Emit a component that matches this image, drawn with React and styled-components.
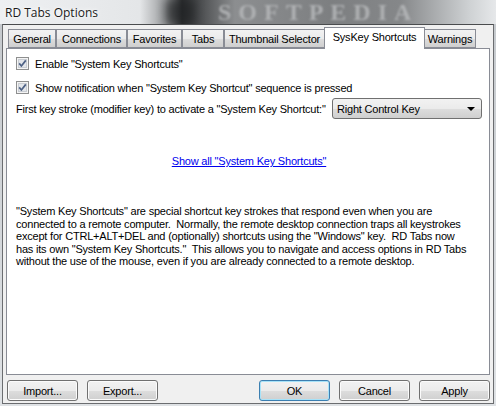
import React from "react"
import styled, { createGlobalStyle } from "styled-components"

const GlobalStyle = createGlobalStyle`
  html, body {
    margin: 0;
    padding: 0;
    background: #d9dde2;
  }
  body {
    font-family: "Liberation Sans", Arial, sans-serif;
    font-size: 11px;
    letter-spacing: -0.2px;
    color: #000;
  }
`

const tabs = [
  { label: "General", width: 48 },
  { label: "Connections", width: 71 },
  { label: "Favorites", width: 55 },
  { label: "Tabs", width: 42 },
  { label: "Thumbnail Selector", width: 101 },
  { label: "SysKey Shortcuts", width: 99, active: true },
  { label: "Warnings", width: 52 },
]

const description = [
  '"System Key Shortcuts" are special shortcut key strokes that respond even when you are',
  "connected to a remote computer.\u00a0 Normally, the remote desktop connection traps all keystrokes",
  'except for CTRL+ALT+DEL and (optionally) shortcuts using the "Windows" key.\u00a0 RD Tabs now',
  'has its own "System Key Shortcuts."\u00a0 This allows you to navigate and access options in RD Tabs',
  "without the use of the mouse, even if you are already connected to a remote desktop.",
]

function CheckIcon() {
  return (
    <svg width="13" height="13" viewBox="0 0 13 13">
      <rect x="0.5" y="0.5" width="12" height="12" fill="#f4f4f4" stroke="#8e8f8f" />
      <rect x="2.5" y="2.5" width="8" height="8" fill="#e3e6ea" stroke="#c9cdd3" />
      <path d="M3.2 6.4 L5.4 9 L9.8 3.4" fill="none" stroke="#4d6185" strokeWidth="1.7" />
    </svg>
  )
}

function App() {
  return (
    <>
      <GlobalStyle />
      <Window>
        <TitleBar>
          <DarkBand />
          <Watermark>SOFTPEDIA</Watermark>
          <Title>RD Tabs Options</Title>
        </TitleBar>
        <Client>
          <TabStrip>
            {tabs.map((t) => (
              <Tab key={t.label} $width={t.width} $active={t.active}>
                {t.label}
              </Tab>
            ))}
          </TabStrip>
          <Panel>
            <CheckRow>
              <CheckIcon />
              Enable "System Key Shortcuts"
            </CheckRow>
            <CheckRow>
              <CheckIcon />
              Show notification when "System Key Shortcut" sequence is pressed
            </CheckRow>
            <KeyRow>
              <span>First key stroke (modifier key) to activate a "System Key Shortcut:"</span>
              <Select>
                Right Control Key
                <Arrow />
              </Select>
            </KeyRow>
            <LinkRow>
              <ShowAll href="#">Show all "System Key Shortcuts"</ShowAll>
            </LinkRow>
            <Description>
              {description.map((line) => (
                <Line key={line}>{line}</Line>
              ))}
            </Description>
          </Panel>
          <ButtonBar>
            <Group>
              <Button>Import...</Button>
              <Button>Export...</Button>
            </Group>
            <Group>
              <Button $default>OK</Button>
              <Button>Cancel</Button>
              <Button>Apply</Button>
            </Group>
          </ButtonBar>
        </Client>
      </Window>
    </>
  )
}

export default App

const Window = styled.div`
  width: 496px;
  height: 406px;
  display: flex;
  flex-direction: column;
  background: linear-gradient(to bottom, #c4c8cc, #dfe2e5);
  overflow: hidden;
`

const TitleBar = styled.div`
  position: relative;
  height: 24px;
  flex-shrink: 0;
  background: linear-gradient(
    to right,
    #eef0f2 0px,
    #e4e6e8 140px,
    #9a9c9e 165px,
    #2c2e30 182px,
    #4b4d4f 200px,
    #8c8e90 235px,
    #7d7f81 330px,
    #858789 400px,
    #cfd2d4 470px,
    #e6e8ea 496px
  );
  overflow: hidden;
`

const DarkBand = styled.div`
  position: absolute;
  left: 165px;
  top: 0;
  width: 30px;
  height: 24px;
  background: #1e2022;
  filter: blur(5px);
  opacity: 0.6;
`

const Watermark = styled.div`
  position: absolute;
  left: 218px;
  top: 1px;
  font-family: "Liberation Serif", "Times New Roman", serif;
  font-size: 24px;
  line-height: 22px;
  font-weight: bold;
  letter-spacing: 7px;
  color: #b9bbbd;
  filter: blur(1.2px);
  opacity: 0.8;
`

const Title = styled.div`
  position: relative;
  padding: 4px 0 0 5px;
  font-family: "Open Sans", "Noto Sans", sans-serif;
  font-size: 12px;
  letter-spacing: 0;
  color: #1a1a1a;
  text-shadow: 0 0 6px #ffffff, 0 0 3px #ffffff;
`

const Client = styled.div`
  flex: 1;
  margin: 0 2px 2px 2px;
  background: #f0f0f0;
  border: 1px solid #6b6d70;
  border-top-color: #4a4c4e;
  padding: 2px 3px 0 3px;
  display: flex;
  flex-direction: column;
`

const TabStrip = styled.div`
  display: flex;
  align-items: flex-end;
  padding-left: 2px;
  height: 21px;
  position: relative;
  z-index: 1;
`

const Tab = styled.div`
  box-sizing: border-box;
  width: ${(p) => (p.$active ? p.$width + 2 : p.$width)}px;
  height: ${(p) => (p.$active ? 22 : 19)}px;
  margin: 0 ${(p) => (p.$active ? -1 : 0)}px ${(p) => (p.$active ? -1 : 0)}px;
  border: 1px solid #898c95;
  border-bottom: ${(p) => (p.$active ? "none" : "1px solid #898c95")};
  background: ${(p) =>
    p.$active ? "#ffffff" : "linear-gradient(to bottom, #f2f2f2 0%, #ebebeb 50%, #dddddd 51%, #cfcfcf 100%)"};
  display: flex;
  align-items: center;
  justify-content: center;
  padding-bottom: ${(p) => (p.$active ? 3 : 0)}px;
  white-space: nowrap;
`

const Panel = styled.div`
  box-sizing: border-box;
  height: 327px;
  background: #ffffff;
  border: 1px solid #898c95;
  padding: 8px 7px 0 9px;
  display: flex;
  flex-direction: column;
`

const CheckRow = styled.label`
  display: flex;
  align-items: center;
  gap: 6px;
  height: 13px;
  margin-bottom: 11px;
  svg {
    flex-shrink: 0;
  }
`

const KeyRow = styled.div`
  display: flex;
  align-items: center;
  justify-content: space-between;
  margin-top: -7px;
  white-space: nowrap;
`

const Select = styled.div`
  box-sizing: border-box;
  width: 150px;
  height: 21px;
  border: 1px solid #707070;
  border-radius: 3px;
  background: linear-gradient(to bottom, #f2f2f2 0%, #ebebeb 50%, #dddddd 51%, #cfcfcf 100%);
  display: flex;
  align-items: center;
  justify-content: space-between;
  padding: 0 6px 0 4px;
`

const Arrow = styled.span`
  width: 0;
  height: 0;
  border-left: 4px solid transparent;
  border-right: 4px solid transparent;
  border-top: 4px solid #000;
`

const LinkRow = styled.div`
  display: flex;
  justify-content: center;
  margin-top: 36px;
`

const ShowAll = styled.a`
  color: #0000ee;
  text-decoration: underline;
`

const Description = styled.div`
  margin-top: 38px;
  display: flex;
  flex-direction: column;
`

const Line = styled.div`
  height: 12.6px;
  line-height: 12.6px;
  white-space: nowrap;
`

const ButtonBar = styled.div`
  display: flex;
  justify-content: space-between;
  padding: 5px 0 0 1px;
`

const Group = styled.div`
  display: flex;
  gap: 9px;
`

const Button = styled.button`
  box-sizing: border-box;
  width: 71px;
  height: 21px;
  border: 1px solid ${(p) => (p.$default ? "#3c7fb1" : "#707070")};
  border-radius: 3px;
  background: linear-gradient(to bottom, #f2f2f2 0%, #ebebeb 50%, #dddddd 51%, #cfcfcf 100%);
  box-shadow: inset 0 0 0 1px ${(p) => (p.$default ? "#a7e2f8" : "#fbfbfb")};
  font-family: "Liberation Sans", Arial, sans-serif;
  font-size: 11px;
  letter-spacing: -0.2px;
  color: #000;
  padding: 0;
`
